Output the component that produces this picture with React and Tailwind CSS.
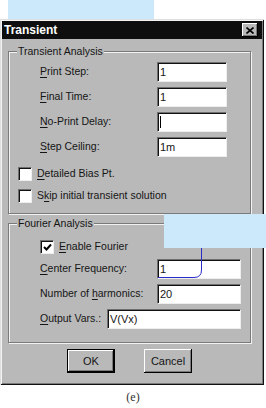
import React from 'react';

const bevelOut = 'shadow-[inset_-1px_-1px_0_#000,inset_1px_1px_0_#fff,inset_-2px_-2px_0_#7b7b7b]';
const sunken = 'bg-white border border-t-[#6f6f6f] border-l-[#6f6f6f] border-b-[#eeeeee] border-r-[#eeeeee] shadow-[inset_1px_1px_0_#111]';

function U({ children }) {
    return <span className="underline underline-offset-[2px] decoration-1">{children}</span>;
}

function Field({ width, value, caret }) {
    return (
        <div className={`${sunken} ${width} h-[20px] flex items-center pl-[2px] text-[11px]`}>
            {caret ? <span className="w-px h-[12px] bg-black" /> : value}
        </div>
    );
}

function Row({ label, labelWidth = 'w-[117px]', width = 'w-[70px]', value, caret }) {
    return (
        <div className="flex items-center h-[20px] pl-[31px]">
            <span className={labelWidth}>{label}</span>
            <Field width={width} value={value} caret={caret} />
        </div>
    );
}

function Check({ checked, children, indent = 'pl-[9px]' }) {
    return (
        <div className={`flex items-center h-[14px] gap-[5px] ${indent}`}>
            <span className={`${sunken} w-[14px] h-[14px] flex items-center justify-center`}>
                {checked && (
                    <svg width="9" height="9" viewBox="0 0 9 9">
                        <path d="M1 4 L3.5 6.5 L8 1.5" fill="none" stroke="#000" strokeWidth="2" />
                    </svg>
                )}
            </span>
            <span>{children}</span>
        </div>
    );
}

function Group({ title, className, children }) {
    return (
        <fieldset className={`ml-[6px] w-[243px] border border-[#7a7a7a] shadow-[1px_1px_0_#f2f2f2,inset_1px_1px_0_#f2f2f2] flex flex-col ${className}`}>
            <legend className="ml-[8px] px-[1px] leading-[13px] bg-[#b9b9b9]">{title}</legend>
            {children}
        </fieldset>
    );
}

export default function App() {
    return (
        <div className="relative w-[266px] h-[408px] bg-white overflow-hidden font-['Liberation_Sans',Arial,sans-serif] text-[10.5px] text-[#151515]">
            <div className="ml-[8px] w-[146px] h-[19px] bg-[#cce8fb]" />

            {/* dialog */}
            <div className={`w-[264px] h-[366px] bg-[#b9b9b9] p-[2px] flex flex-col shadow-[inset_1px_1px_0_#dedede,inset_-1px_-1px_0_#111,inset_2px_2px_0_#f4f4f4,inset_-2px_-2px_0_#7b7b7b]`}>
                <div className="h-[18px] bg-[#0e0e0e] flex items-center justify-between pl-[2px] pr-[4px]">
                    <span className="text-white font-bold text-[12px] leading-none">Transient</span>
                    <button className={`w-[16px] h-[14px] bg-[#b9b9b9] ${bevelOut} flex items-center justify-center`}>
                        <svg width="8" height="7" viewBox="0 0 8 7">
                            <path d="M0.5 0.5 L7.5 6.5 M7.5 0.5 L0.5 6.5" stroke="#000" strokeWidth="1.6" />
                        </svg>
                    </button>
                </div>

                <Group title="Transient Analysis" className="mt-[6px] pb-[10px]">
                    <div className="flex flex-col gap-[5px] mt-[4px]">
                        <Row label={<><U>P</U>rint Step:</>} value="1" />
                        <Row label={<><U>F</U>inal Time:</>} value="1" />
                        <Row label={<><U>N</U>o-Print Delay:</>} caret />
                        <Row label={<><U>S</U>tep Ceiling:</>} value="1m" />
                    </div>
                    <div className="flex flex-col gap-[8px] mt-[10px]">
                        <Check><U>D</U>etailed Bias Pt.</Check>
                        <Check>S<U>k</U>ip initial transient solution</Check>
                    </div>
                </Group>

                <Group title="Fourier Analysis" className="mt-[3px] pb-[13px]">
                    <div className="mt-[10px]">
                        <Check checked indent="pl-[31px]"><U>E</U>nable Fourier</Check>
                    </div>
                    <div className="flex flex-col gap-[5px] mt-[5px]">
                        <Row label={<><U>C</U>enter Frequency:</>} width="w-[84px]" value="1" />
                        <Row label={<>Number of <U>h</U>armonics:</>} width="w-[84px]" value="20" />
                        <Row label={<><U>O</U>utput Vars.:</>} labelWidth="w-[67px]" width="w-[134px]" value="V(Vx)" />
                    </div>
                </Group>

                <div className="flex gap-[29px] pl-[65px] mt-[6px]">
                    <button className={`w-[48px] h-[24px] bg-[#b9b9b9] border border-black ${bevelOut} text-[11px]`}>OK</button>
                    <button className={`w-[48px] h-[24px] bg-[#b9b9b9] ${bevelOut} text-[11px]`}>Cancel</button>
                </div>
            </div>

            <p className="mt-[4px] text-center font-['Liberation_Serif',serif] text-[12px] leading-[16px] text-[#333]">(e)</p>

            {/* annotation overlay */}
            <div className="absolute left-[164px] top-[214px] w-[102px] h-[34px] bg-[#cce8fb]" />
            <svg className="absolute left-0 top-0 pointer-events-none" width="266" height="408">
                <path d="M201.5 248 L201.5 270 Q201.5 277.5 194 277.5 L158 277.5" fill="none" stroke="#2b2bc8" strokeWidth="1" />
            </svg>
        </div>
    );
}
